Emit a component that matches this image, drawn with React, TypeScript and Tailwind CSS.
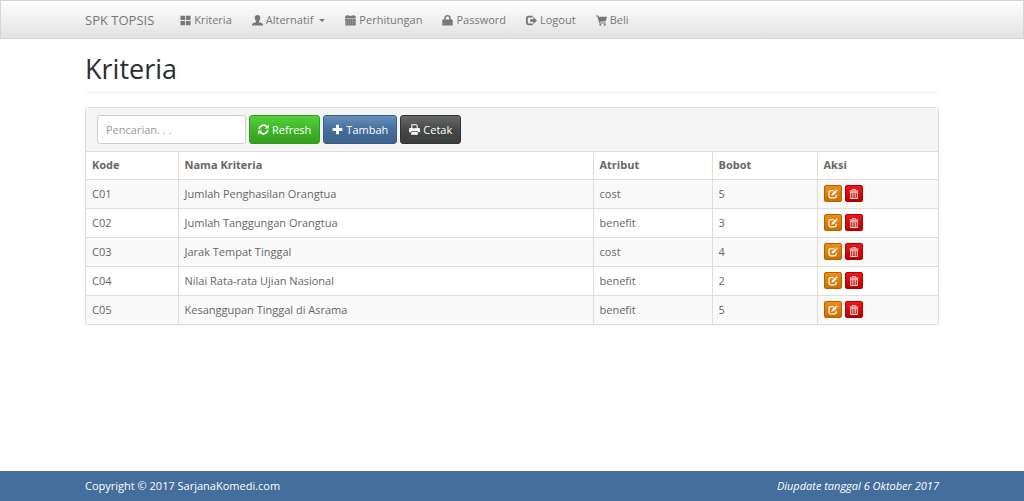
import React from "react";

type IconProps = {
  className?: string;
};

type Criterion = {
  code: string;
  name: string;
  attribute: string;
  weight: number;
};

const criteria: Criterion[] = [
  { code: "C01", name: "Jumlah Penghasilan Orangtua", attribute: "cost", weight: 5 },
  { code: "C02", name: "Jumlah Tanggungan Orangtua", attribute: "benefit", weight: 3 },
  { code: "C03", name: "Jarak Tempat Tinggal", attribute: "cost", weight: 4 },
  { code: "C04", name: "Nilai Rata-rata Ujian Nasional", attribute: "benefit", weight: 2 },
  { code: "C05", name: "Kesanggupan Tinggal di Asrama", attribute: "benefit", weight: 5 },
];

function Icon({ className = "size-[11px]", children }: IconProps & { children: React.ReactNode }) {
  return (
    <svg viewBox="0 0 12 12" fill="currentColor" aria-hidden="true" className={`shrink-0 ${className}`}>
      {children}
    </svg>
  );
}

const GridIcon = () => (
  <Icon>
    <path d="M.5.8h5v4.700h-5zM6.500.8h5v4.700h-5zM.5 6.500h5v4.700h-5zM6.500 6.500h5v4.700h-5z" />
  </Icon>
);

const UserIcon = () => (
  <Icon>
    <path d="M6 0c1.900 0 3 1.200 3 3.100 0 1.600-.6 2.700-1.300 3.500v.9c.3.600 3.700 1.200 4.200 2.200.2.500.3 1 .3 1.700H-.2c0-.7.1-1.200.3-1.700.5-1 3.900-1.600 4.200-2.200v-.9C3.600 5.800 3 4.700 3 3.100 3 1.200 4.100 0 6 0z" />
  </Icon>
);

const CalendarIcon = () => (
  <Icon>
    <path d="M.3.900h1.900V0h1.300v.9h5V0h1.300v.9h1.900v2.400H.3z" />
    <path
      fillRule="evenodd"
      d="M.3 3.900h11.400v7.600H.3zM3.200 5v.8H4V5zm2.400 0v.8h.8V5zM8 5v.8h.8V5zM1.200 7.200v.8H2v-.8zm2 0v.8H4v-.8zm2.400 0v.8h.8v-.8zm2.400 0v.8h.8v-.8zm2 0v.8h.8v-.8zM1.200 9.400v.8H2v-.8zm2 0v.8H4v-.8zm2.400 0v.8h.8v-.8zm2.400 0v.8h.8v-.8z"
    />
  </Icon>
);

const LockIcon = () => (
  <Icon>
    <path
      fillRule="evenodd"
      d="M2.500 5V3.300C2.500 1.300 4 0 6 0s3.500 1.300 3.500 3.300V5h1.500c.4 0 .7.300.7.700v5.100c0 .4-.3.700-.7.700H1c-.4 0-.7-.3-.7-.7V5.700c0-.4.300-.7.700-.7zm1.700 0h3.600V3.400C7.800 2.300 7.100 1.600 6 1.600s-1.800.7-1.800 1.800z"
    />
  </Icon>
);

const LogoutIcon = () => (
  <Icon>
    <path d="M7.300 1.700H2.900A1.900 1.900 0 0 0 1 3.600v4.800a1.900 1.900 0 0 0 1.900 1.900h4.400" fill="none" stroke="currentColor" strokeWidth="2" />
    <path d="M4.500 4.700H8V2.300L12 6 8 9.700V7.300H4.500z" />
  </Icon>
);

const CartIcon = () => (
  <Icon>
    <path d="M0 .5h2.400l.5 1.400H12L10.700 6.700 4.200 7.300l.3.900h6.200v1.200H3.600L1.600 1.700H0z" />
    <circle cx="4.700" cy="10.700" r="1.100" />
    <circle cx="9.600" cy="10.700" r="1.100" />
  </Icon>
);

const RefreshIcon = () => (
  <Icon>
    <path d="M1.300 5.500A4.800 4.800 0 0 1 9.500 2.800M10.700 6.500A4.800 4.800 0 0 1 2.500 9.200" fill="none" stroke="currentColor" strokeWidth="1.800" />
    <path d="M11.900.6v4.200H7.600zM.1 11.400V7.200h4.300z" />
  </Icon>
);

const PlusIcon = () => (
  <Icon>
    <path d="M4.400.7h3.200v3.700h3.700v3.200H7.600v3.700H4.400V7.600H.7V4.400h3.700z" />
  </Icon>
);

const PrintIcon = () => (
  <Icon>
    <path fillRule="evenodd" d="M2.500.2h5.800l1.200 1.400V4.300H11l1 1V9H9.900l-.4-1.200h-7L2.100 9H0V5.300l1-1h1.500zM3.700 1.400v3.300h4.600V1.400z" />
    <path d="M2.900 8.600h6.200l.8 3.200H2.100z" />
  </Icon>
);

const EditIcon = () => (
  <Icon className="size-[10px]">
    <path d="M7 2H3a1.800 1.800 0 0 0-1.800 1.800v5A1.800 1.800 0 0 0 3 10.600h5a1.800 1.800 0 0 0 1.800-1.800V7" fill="none" stroke="currentColor" strokeWidth="1.500" />
    <path d="M4.600 5.700l4-4 1.900 1.900-4 4-2.500.6zM9.200 1.100l.8-.8 1.900 1.900-.8.800z" />
  </Icon>
);

const TrashIcon = () => (
  <Icon className="size-[10px]">
    <path d="M4.200 1.500V.5h3.600v1M.8 2.300h10.400" fill="none" stroke="currentColor" />
    <path d="M2 3.500v7.900h8V3.500M4.600 4v6.500M7.400 4v6.500M1.500 3.700h9" fill="none" stroke="currentColor" strokeWidth="1.100" />
  </Icon>
);

const navLinks = [
  { label: "Kriteria", icon: <GridIcon /> },
  { label: "Alternatif", icon: <UserIcon />, caret: true },
  { label: "Perhitungan", icon: <CalendarIcon /> },
  { label: "Password", icon: <LockIcon /> },
  { label: "Logout", icon: <LogoutIcon /> },
  { label: "Beli", icon: <CartIcon /> },
];

function Navbar() {
  return (
    <nav className="border border-[#d5d5d5] bg-linear-to-b from-white to-[#e1e1e1] text-[#777]">
      <div className="mx-auto flex h-[37px] max-w-[854px] items-center">
        <a href="#" className="mr-4 text-[13px]">
          SPK TOPSIS
        </a>
        {navLinks.map((link) => (
          <a key={link.label} href="#" className="flex items-center gap-[3px] px-[10px] pt-px">
            {link.icon}
            {link.label}
            {link.caret && (
              <span className="ml-[3px] border-x-[3px] border-t-[3px] border-x-transparent border-t-current" />
            )}
          </a>
        ))}
      </div>
    </nav>
  );
}

function Toolbar() {
  return (
    <form className="flex gap-[3px] border-b border-[#ddd] bg-[#f5f5f5] px-[11px] py-[7px]">
      <input
        type="text"
        aria-label="Pencarian"
        placeholder="Pencarian. . ."
        className="h-[29px] w-[149px] rounded-[3px] border border-[#ccc] bg-white px-2 placeholder:text-[#999]"
      />
      <button
        type="button"
        className="flex h-[29px] items-center gap-[3px] rounded-[3px] border border-[#2f9a1c] bg-linear-to-b from-[#54d13c] via-[#3fb528] to-[#37a022] px-2 text-white"
      >
        <RefreshIcon />
        Refresh
      </button>
      <a
        href="#"
        className="flex h-[29px] items-center gap-[3px] rounded-[3px] border border-[#385c86] bg-linear-to-b from-[#6a90bd] via-[#446e9b] to-[#3e648d] px-2 text-white"
      >
        <PlusIcon />
        Tambah
      </a>
      <a
        href="#"
        className="flex h-[29px] items-center gap-[3px] rounded-[3px] border border-[#333] bg-linear-to-b from-[#686a6a] via-[#474949] to-[#3c3e3e] px-2 text-white"
      >
        <PrintIcon />
        Cetak
      </a>
    </form>
  );
}

function CriteriaTable() {
  return (
    <table className="w-full table-fixed border-collapse text-left">
      <thead>
        <tr className="h-[27px] divide-x divide-[#ddd] font-bold">
          <th className="w-[92px] px-1.5">Kode</th>
          <th className="px-1.5">Nama Kriteria</th>
          <th className="w-[119px] px-1.5">Atribut</th>
          <th className="w-[105px] px-1.5">Bobot</th>
          <th className="w-[121px] px-1.5">Aksi</th>
        </tr>
      </thead>
      <tbody>
        {criteria.map((item) => (
          <tr key={item.code} className="h-[29px] divide-x divide-[#ddd] border-t border-[#ddd] odd:bg-[#f9f9f9]">
            <td className="px-1.5">{item.code}</td>
            <td className="px-1.5">{item.name}</td>
            <td className="px-1.5">{item.attribute}</td>
            <td className="px-1.5">{item.weight}</td>
            <td className="px-1.5">
              <div className="flex gap-[3px]">
                <a
                  href="#"
                  aria-label={`Ubah ${item.code}`}
                  className="flex h-[17px] w-[18px] items-center justify-center rounded-xs border border-[#b36200] bg-linear-to-b from-[#ee8d16] to-[#c87000] text-white"
                >
                  <EditIcon />
                </a>
                <a
                  href="#"
                  aria-label={`Hapus ${item.code}`}
                  className="flex h-[17px] w-[18px] items-center justify-center rounded-xs border border-[#b00000] bg-linear-to-b from-[#ee1717] to-[#b80000] text-white"
                >
                  <TrashIcon />
                </a>
              </div>
            </td>
          </tr>
        ))}
      </tbody>
    </table>
  );
}

export default function App() {
  return (
    <div className="flex min-h-screen flex-col bg-white font-['Open_Sans',sans-serif] text-[11px] leading-4 text-[#666]">
      <Navbar />

      <main className="mx-auto w-full max-w-[854px] grow">
        <h1 className="mt-[14px] mb-[14px] border-b border-[#eee] pb-[7px] text-[27px] leading-8 text-[#2d2d2d]">
          Kriteria
        </h1>
        <div className="overflow-hidden rounded-[3px] border border-[#ddd] shadow-xs">
          <Toolbar />
          <CriteriaTable />
        </div>
      </main>

      <footer className="bg-[#446e9b] text-white">
        <div className="mx-auto flex h-[30px] max-w-[854px] items-center justify-between">
          <p>Copyright © 2017 SarjanaKomedi.com</p>
          <p className="italic">Diupdate tanggal 6 Oktober 2017</p>
        </div>
      </footer>
    </div>
  );
}
